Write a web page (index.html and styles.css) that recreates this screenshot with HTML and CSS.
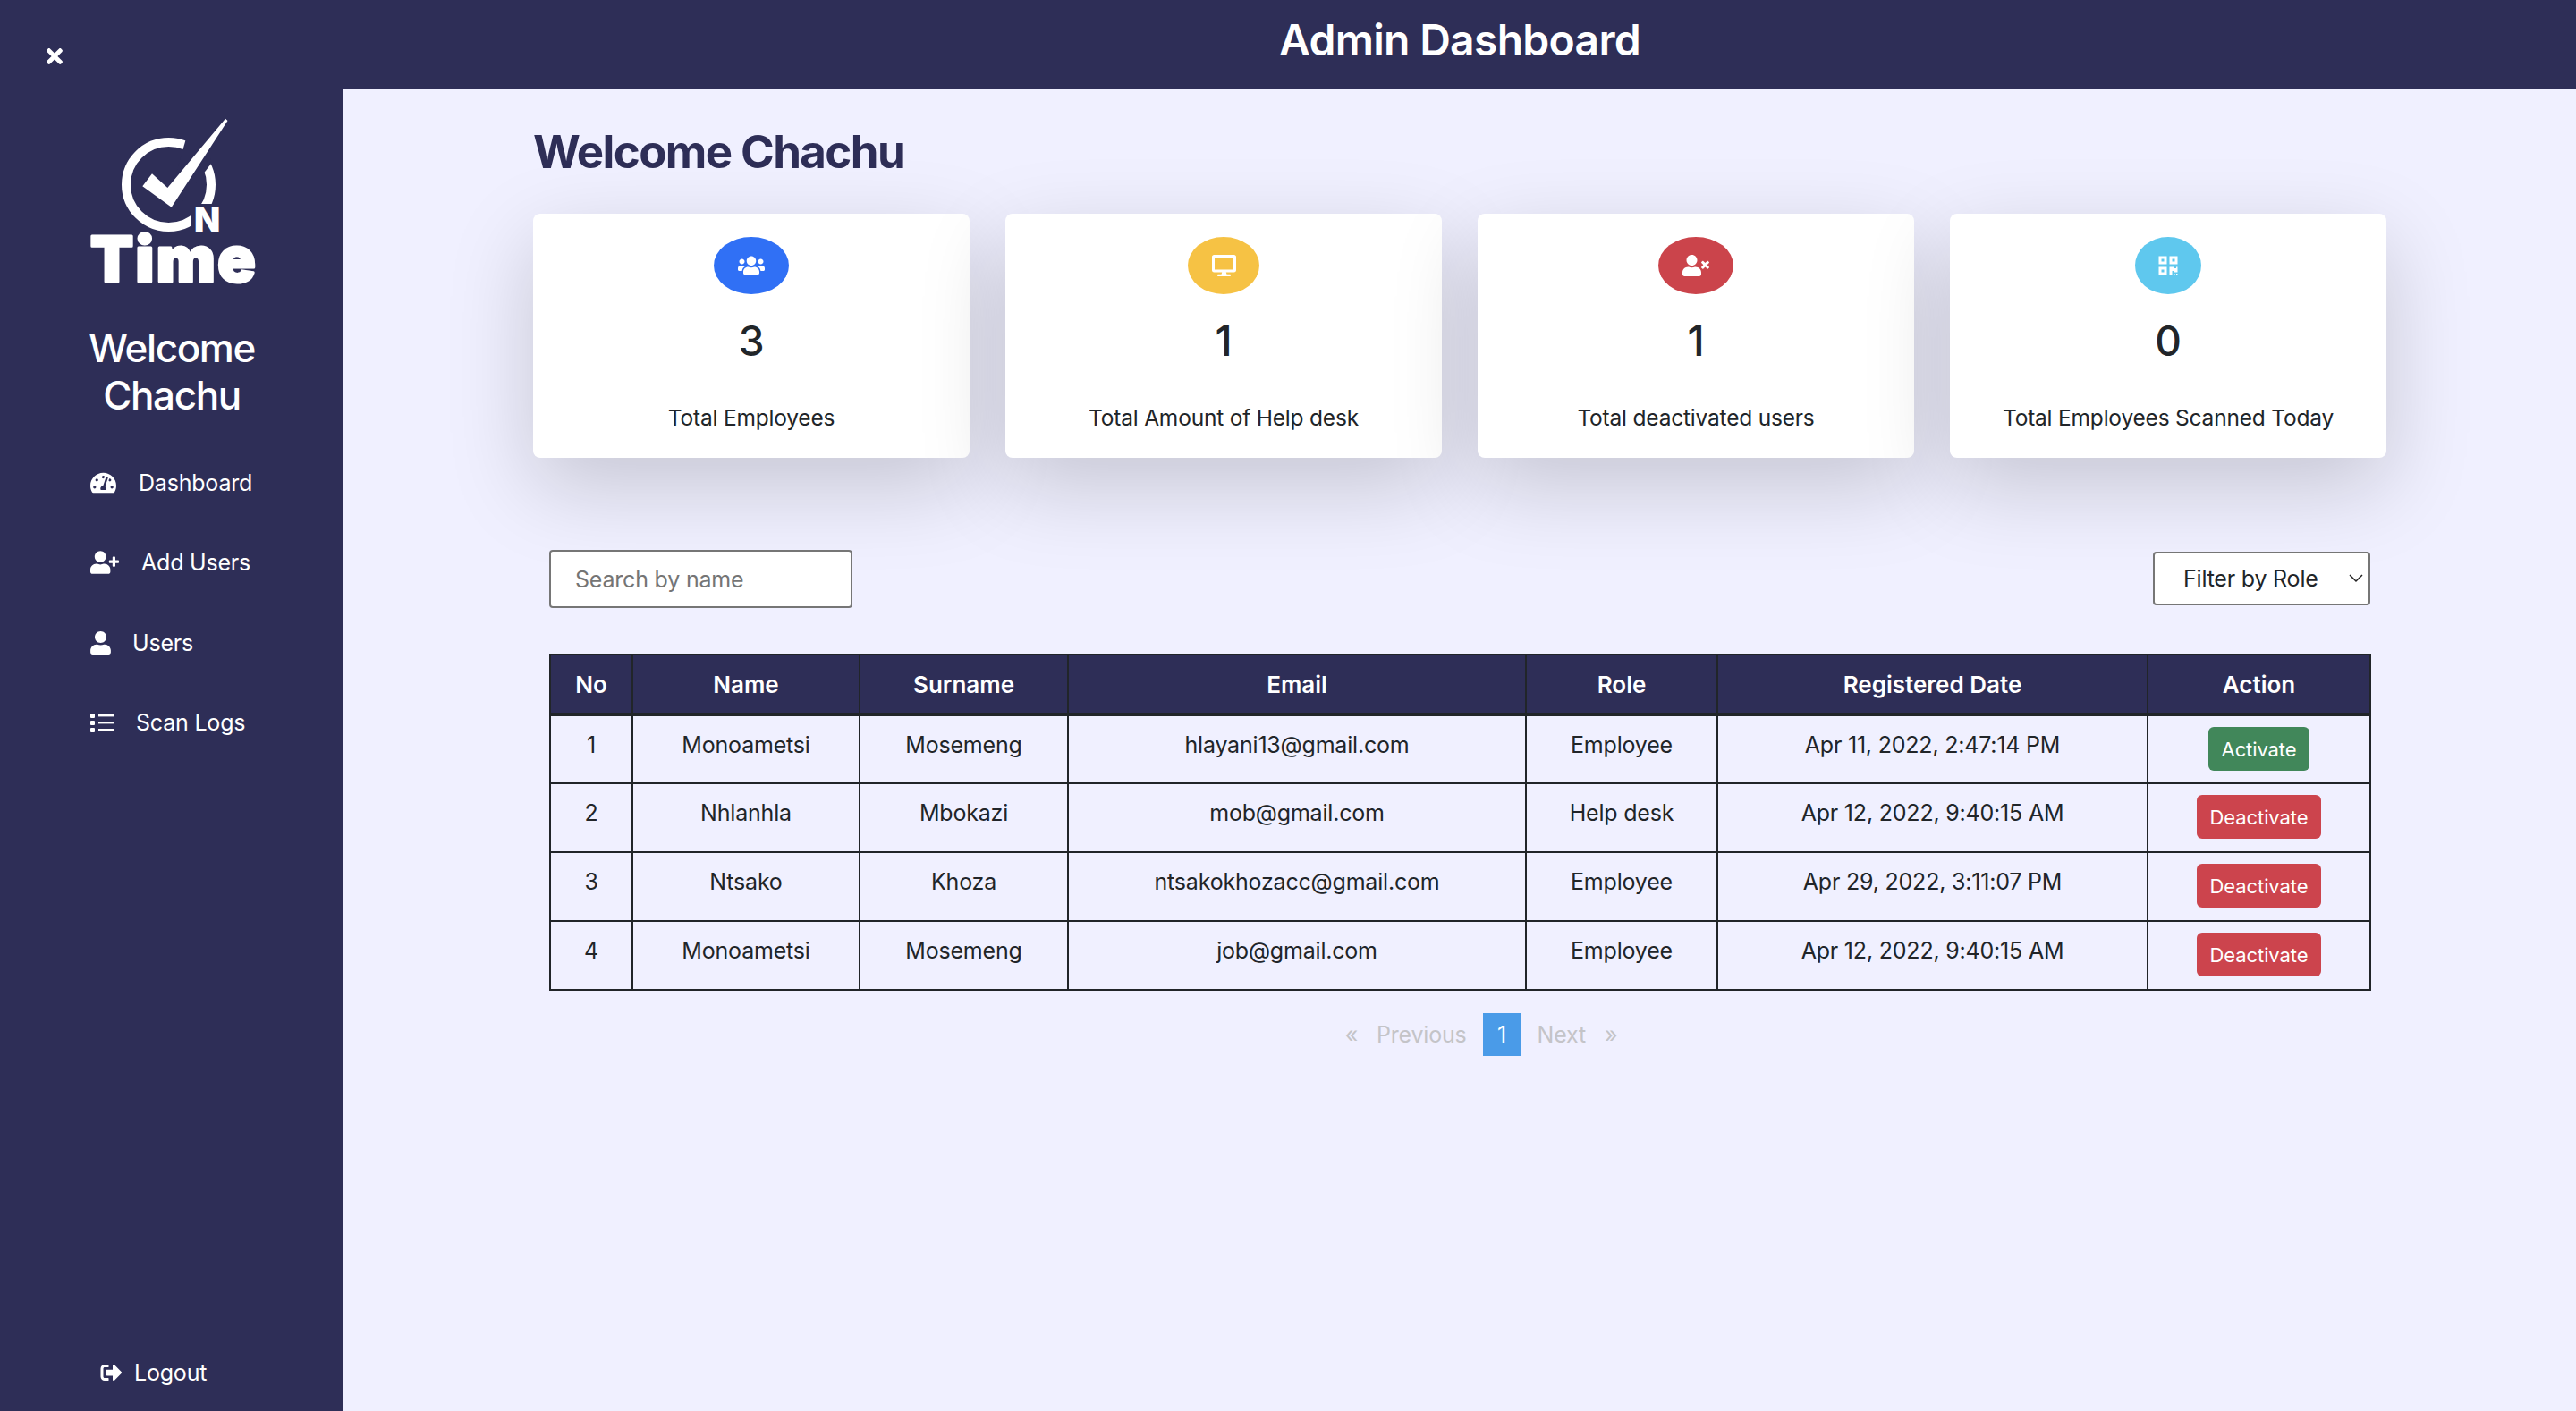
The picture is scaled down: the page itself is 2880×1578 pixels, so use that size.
FILE: index.html
```html
<!DOCTYPE html>
<html lang="en">
<head>
<meta charset="UTF-8">
<title>Admin Dashboard</title>
<link rel="stylesheet" href="styles.css">
</head>
<body>

<aside class="sidebar">
<svg class="close-icon" viewBox="0 0 352 512"><path d="M242.72 256l100.07-100.07c12.28-12.28 12.28-32.19 0-44.48l-22.24-22.24c-12.28-12.28-32.19-12.28-44.48 0L176 189.28 75.93 89.21c-12.28-12.28-32.19-12.28-44.48 0L9.21 111.45c-12.28 12.28-12.28 32.19 0 44.48L109.28 256 9.21 356.07c-12.28 12.28-12.28 32.19 0 44.48l22.24 22.24c12.28 12.28 32.2 12.28 44.48 0L176 322.72l100.07 100.07c12.28 12.28 32.2 12.28 44.48 0l22.24-22.24c12.28-12.28 12.28-32.19 0-44.48L242.72 256z"/></svg>

<svg class="logo" viewBox="0 0 200 210">
<circle cx="96.500" cy="81.500" r="47.500" fill="none" stroke="#fff" stroke-width="10"/>
<path d="M116 30 L140 30 L144 58 L112 100 L96 100 Z" fill="#2e2e57"/>
<path d="M67.300 83.300 L78 69.300 L95.300 85 L160 7.700 L162.500 10 L99.700 106.700 Z" fill="#fff"/>
<rect x="122" y="103" width="34" height="32" fill="#2e2e57"/>
<text class="logo-n" x="125" y="134">N</text>
<text class="logo-time" x="9" y="189.500">Time</text>
</svg>

<h2 class="side-welcome">Welcome<br>Chachu</h2>

<nav class="side-nav">
<a href="#"><svg class="nav-icon gauge" viewBox="0 0 576 512"><path d="M288 32C128.94 32 0 160.94 0 320c0 52.8 14.25 102.26 39.06 144.8 5.61 9.62 16.3 15.2 27.44 15.2h443c11.14 0 21.83-5.58 27.44-15.2C561.75 422.26 576 372.8 576 320c0-159.06-128.94-288-288-288zm0 64c14.71 0 26.58 10.13 30.32 23.65-1.11 2.26-2.64 4.23-3.45 6.67l-9.22 27.67c-5.13 3.49-10.97 6.01-17.64 6.01-17.67 0-32-14.33-32-32S270.33 96 288 96zM96 384c-17.67 0-32-14.33-32-32s14.33-32 32-32 32 14.33 32 32-14.33 32-32 32zm48-160c-17.67 0-32-14.33-32-32s14.33-32 32-32 32 14.33 32 32-14.33 32-32 32zm246.77-72.41l-61.33 184C343.13 347.33 352 364.54 352 384c0 11.72-3.38 22.55-8.88 32H232.88c-5.5-9.45-8.88-20.28-8.88-32 0-33.94 26.5-61.43 59.9-63.59l61.34-184.01c4.17-12.56 17.73-19.45 30.36-15.17 12.57 4.19 19.35 17.79 15.17 30.36zm14.66 57.2l15.52-46.55c3.47-1.29 7.13-2.23 11.05-2.23 17.67 0 32 14.33 32 32s-14.33 32-32 32c-11.38-.01-20.89-6.28-26.57-15.22zM480 384c-17.67 0-32-14.33-32-32s14.33-32 32-32 32 14.33 32 32-14.33 32-32 32z"/></svg>Dashboard</a>
<a href="#"><svg class="nav-icon user-plus" viewBox="0 0 640 512"><path d="M624 208h-64v-64c0-8.800-7.200-16-16-16h-32c-8.800 0-16 7.200-16 16v64h-64c-8.800 0-16 7.200-16 16v32c0 8.800 7.200 16 16 16h64v64c0 8.800 7.200 16 16 16h32c8.800 0 16-7.200 16-16v-64h64c8.800 0 16-7.200 16-16v-32c0-8.800-7.200-16-16-16zm-400 48c70.700 0 128-57.300 128-128S294.700 0 224 0 96 57.300 96 128s57.300 128 128 128zm89.600 32h-16.700c-22.200 10.200-46.900 16-72.900 16s-50.600-5.800-72.900-16h-16.700C60.200 288 0 348.200 0 422.400V464c0 26.500 21.500 48 48 48h352c26.500 0 48-21.500 48-48v-41.600c0-74.200-60.200-134.400-134.400-134.400z"/></svg>Add Users</a>
<a href="#"><svg class="nav-icon user" viewBox="0 0 448 512"><path d="M224 256c70.700 0 128-57.300 128-128S294.700 0 224 0 96 57.300 96 128s57.300 128 128 128zm89.600 32h-16.700c-22.200 10.200-46.900 16-72.900 16s-50.600-5.800-72.900-16h-16.700C60.200 288 0 348.200 0 422.400V464c0 26.500 21.500 48 48 48h352c26.500 0 48-21.500 48-48v-41.600c0-74.200-60.200-134.400-134.400-134.400z"/></svg>Users</a>
<a href="#"><svg class="nav-icon list" viewBox="0 0 27 21"><rect y="0" width="5" height="5" rx="1"/><rect y="8" width="5" height="5" rx="1"/><rect y="16" width="5" height="5" rx="1"/><rect x="9" y="1" width="18" height="2.400"/><rect x="9" y="9" width="18" height="2.400"/><rect x="9" y="17" width="18" height="2.400"/></svg>Scan Logs</a>
</nav>

<a class="logout" href="#"><svg class="logout-icon" viewBox="0 0 512 512"><path d="M497 273L329 441c-15 15-41 4.500-41-17v-96H152c-13.300 0-24-10.700-24-24v-96c0-13.300 10.700-24 24-24h136V88c0-21.400 25.900-32 41-17l168 168c9.300 9.400 9.300 24.600 0 34zM192 436v-40c0-6.600-5.400-12-12-12H96c-17.700 0-32-14.300-32-32V160c0-17.700 14.300-32 32-32h84c6.600 0 12-5.400 12-12V76c0-6.600-5.400-12-12-12H96c-53 0-96 43-96 96v192c0 53 43 96 96 96h84c6.600 0 12-5.400 12-12z"/></svg>Logout</a>
</aside>

<div class="content">
<header class="topbar"><h1>Admin Dashboard</h1></header>

<main class="main">
<h2 class="page-title">Welcome Chachu</h2>

<section class="cards">
<div class="card">
<span class="badge badge-blue"><svg viewBox="0 0 640 512"><path d="M96 224c35.300 0 64-28.700 64-64s-28.700-64-64-64-64 28.700-64 64 28.700 64 64 64zm448 0c35.300 0 64-28.700 64-64s-28.700-64-64-64-64 28.700-64 64 28.700 64 64 64zm32 32h-64c-17.600 0-33.500 7.100-45.100 18.600 40.300 22.100 68.900 62 75.100 109.400h66c17.700 0 32-14.300 32-32v-32c0-35.300-28.700-64-64-64zm-256 0c61.900 0 112-50.100 112-112S381.900 32 320 32 208 82.100 208 144s50.100 112 112 112zm76.800 32h-8.300c-20.800 10-43.900 16-68.500 16s-47.600-6-68.500-16h-8.300C179.600 288 128 339.600 128 403.200V432c0 26.500 21.500 48 48 48h288c26.500 0 48-21.500 48-48v-28.800c0-63.600-51.600-115.200-115.200-115.200zm-223.700-13.400C161.500 263.100 145.600 256 128 256H64c-35.300 0-64 28.700-64 64v32c0 17.700 14.300 32 32 32h65.900c6.300-47.400 34.900-87.300 75.200-109.400z"/></svg></span>
<div class="count">3</div>
<p class="card-label">Total Employees</p>
</div>
<div class="card">
<span class="badge badge-yellow"><svg viewBox="0 0 576 512"><path d="M528 0H48C21.500 0 0 21.500 0 48v320c0 26.500 21.500 48 48 48h192l-16 48h-72c-13.300 0-24 10.700-24 24s10.700 24 24 24h272c13.300 0 24-10.700 24-24s-10.700-24-24-24h-72l-16-48h192c26.500 0 48-21.500 48-48V48c0-26.500-21.500-48-48-48zm-16 352H64V64h448v288z"/></svg></span>
<div class="count">1</div>
<p class="card-label">Total Amount of Help desk</p>
</div>
<div class="card">
<span class="badge badge-red"><svg viewBox="0 0 640 512"><path d="M589.600 240l45.600-45.600c6.300-6.300 6.300-16.500 0-22.800l-22.800-22.800c-6.300-6.300-16.500-6.300-22.800 0L544 194.400l-45.600-45.600c-6.300-6.300-16.500-6.300-22.800 0l-22.800 22.800c-6.300 6.300-6.300 16.500 0 22.800l45.600 45.600-45.600 45.600c-6.300 6.300-6.300 16.500 0 22.800l22.800 22.800c6.300 6.300 16.500 6.300 22.800 0l45.600-45.600 45.600 45.600c6.300 6.300 16.500 6.300 22.800 0l22.800-22.800c6.300-6.300 6.300-16.500 0-22.800L589.600 240zM224 256c70.700 0 128-57.300 128-128S294.700 0 224 0 96 57.300 96 128s57.300 128 128 128zm89.600 32h-16.700c-22.200 10.200-46.900 16-72.900 16s-50.600-5.800-72.900-16h-16.700C60.200 288 0 348.200 0 422.400V464c0 26.500 21.500 48 48 48h352c26.500 0 48-21.500 48-48v-41.600c0-74.200-60.200-134.400-134.400-134.400z"/></svg></span>
<div class="count">1</div>
<p class="card-label">Total deactivated users</p>
</div>
<div class="card">
<span class="badge badge-cyan"><svg viewBox="0 0 448 512"><path d="M0 224h192V32H0v192zM64 96h64v64H64V96zm192-64v192h192V32H256zm128 128h-64V96h64v64zM0 480h192V288H0v192zm64-128h64v64H64v-64zm352-64h32v128h-96v-32h-32v96h-64V288h96v32h64v-32zm0 160h32v32h-32v-32zm-64 0h32v32h-32v-32z"/></svg></span>
<div class="count">0</div>
<p class="card-label">Total Employees Scanned Today</p>
</div>
</section>

<section class="users">
<div class="toolbar">
<input class="search" type="text" placeholder="Search by name">
<button class="role-filter" type="button">Filter by Role<svg viewBox="0 0 16 10"><path d="M1 1l7 7 7-7" fill="none" stroke="#222" stroke-width="1.500"/></svg></button>
</div>

<table class="user-table">
<colgroup>
<col class="c-no"><col class="c-name"><col class="c-surname"><col class="c-email"><col class="c-role"><col class="c-date"><col class="c-action">
</colgroup>
<thead>
<tr><th>No</th><th>Name</th><th>Surname</th><th>Email</th><th>Role</th><th>Registered Date</th><th>Action</th></tr>
</thead>
<tbody>
<tr><td>1</td><td>Monoametsi</td><td>Mosemeng</td><td>hlayani13@gmail.com</td><td>Employee</td><td>Apr 11, 2022, 2:47:14 PM</td><td><button class="btn btn-green" type="button">Activate</button></td></tr>
<tr><td>2</td><td>Nhlanhla</td><td>Mbokazi</td><td>mob@gmail.com</td><td>Help desk</td><td>Apr 12, 2022, 9:40:15 AM</td><td><button class="btn btn-red" type="button">Deactivate</button></td></tr>
<tr><td>3</td><td>Ntsako</td><td>Khoza</td><td>ntsakokhozacc@gmail.com</td><td>Employee</td><td>Apr 29, 2022, 3:11:07 PM</td><td><button class="btn btn-red" type="button">Deactivate</button></td></tr>
<tr><td>4</td><td>Monoametsi</td><td>Mosemeng</td><td>job@gmail.com</td><td>Employee</td><td>Apr 12, 2022, 9:40:15 AM</td><td><button class="btn btn-red" type="button">Deactivate</button></td></tr>
</tbody>
</table>

<div class="pager">
<span class="arrow-prev">«</span>
<span class="pager-prev">Previous</span>
<span class="pager-current">1</span>
<span class="pager-next">Next</span>
<span class="arrow-next">»</span>
</div>
</section>
</main>
</div>

</body>
</html>
```

FILE: styles.css
```css
*{box-sizing:border-box}
html,body{height:100%}
body{margin:0;display:flex;height:1578px;overflow:hidden;font-family:Inter,"Noto Sans",sans-serif;font-size:25px;letter-spacing:-.2px;background:#f0f0ff;color:#212529}

.sidebar{width:384px;flex:none;height:100%;background:#2e2e57;color:#fff;display:flex;flex-direction:column;padding-top:50px}
.close-icon{display:block;width:18px;height:26px;margin-left:52px;fill:#fff}
.logo{display:block;flex:none;width:200px;height:210px;margin:49px 0 0 92px}
.logo-n{font:900 38px Inter,sans-serif;fill:#fff}
.logo-time{font:900 70px Inter,sans-serif;fill:#fff;stroke:#fff;stroke-width:3;stroke-linejoin:round;letter-spacing:2.500px}
.side-welcome{margin:28px 0 0;font-size:44px;line-height:53px;font-weight:500;letter-spacing:-1.400px;text-align:center}

.side-nav{display:flex;flex-direction:column;margin-top:26px;padding-left:101px}
.side-nav a{display:flex;align-items:center;height:89.500px;color:#fff;text-decoration:none}
.nav-icon{fill:#fff;flex:none}
.gauge{width:29px;height:26px;margin-right:25px}
.user-plus{width:32px;height:26px;margin-right:25px}
.user{width:23px;height:26px;margin-right:24px}
.list{width:27px;height:21px;margin-right:24px}

.logout{margin-top:auto;margin-bottom:28px;margin-left:111px;display:flex;align-items:center;color:#fff;text-decoration:none}
.logout-icon{width:27px;height:24px;fill:#fff;margin-right:12px}

.content{flex:1;min-width:0;display:flex;flex-direction:column}
.topbar{height:100px;flex:none;background:#2e2e57;color:#fff;text-align:center}
.topbar h1{margin:0;font-size:48px;font-weight:600;letter-spacing:-.7px;line-height:90px}

.main{padding:0 212px}
.page-title{margin:0;padding-top:40px;height:139px;font-size:51px;line-height:60px;font-weight:700;color:#2e2e57;letter-spacing:-1.600px}

.cards{display:grid;grid-template-columns:repeat(4,488px);gap:40px}
.card{height:273px;background:#fff;border-radius:8px;box-shadow:0 32px 96px rgba(0,0,0,.175);display:flex;flex-direction:column;align-items:center;padding-top:26px}
.badge{display:flex;align-items:center;justify-content:center;height:64px;border-radius:50%}
.badge svg{fill:#fff;height:24px}
.badge-blue{width:84px;background:#3070f5}
.badge-blue svg{width:32px}
.badge-yellow{width:80px;background:#f6c244}
.badge-yellow svg{width:27px}
.badge-red{width:84px;background:#cb444b}
.badge-red svg{width:32px}
.badge-cyan{width:74px;background:#5fc8ee}
.badge-cyan svg{width:22px}
.count{margin-top:24px;font-size:46px;line-height:56px;font-weight:500}
.card-label{margin:38px 0 0;font-size:24.500px;line-height:40px}

.users{padding:0 18px}
.toolbar{display:flex;justify-content:space-between;align-items:center;margin-top:103px;height:65px}
.search{width:339px;height:65px;padding:0 27px;background:#fff;border:2px solid #767676;border-radius:4px;font:25px Inter,sans-serif;letter-spacing:-.2px;color:#212529}
.search::placeholder{color:#757575}
.role-filter{display:flex;align-items:center;width:243px;height:60px;margin-top:-1px;padding:0 6px 0 32px;background:#fff;border:2px solid #767676;border-radius:4px;font:25px Inter,sans-serif;letter-spacing:-.2px;color:#212529}
.role-filter svg{width:16px;height:10px;margin-left:auto}

.user-table{width:2035px;margin-top:51px;table-layout:fixed;border-collapse:collapse;border:2px solid #212529}
.c-no{width:92px}
.c-name{width:254px}
.c-surname{width:233px}
.c-email{width:512px}
.c-role{width:214px}
.c-date{width:481px}
.c-action{width:249px}
th,td{border:2px solid #212529;text-align:center;line-height:39px}
th{height:67px;padding:0 8px;background:#2e2e57;color:#fff;font-size:26px;font-weight:600;letter-spacing:0;border-bottom-width:4px}
td{height:77px;padding:12px 8px 0;line-height:41px;vertical-align:top}
.btn{display:block;margin:0 auto;height:49px;padding:0;border:none;border-radius:6px;color:#fff;font:22px Inter,sans-serif;letter-spacing:-.1px}
.btn-green{width:113px;background:#41875a}
.btn-red{width:139px;background:#cc444d}

.pager{display:flex;align-items:center;justify-content:center;margin-top:25px;padding-left:48px;color:#c4c4c8}
.arrow-prev{margin-right:21px}
.pager-prev{margin-right:18px}
.pager-current{width:43px;height:48px;line-height:48px;text-align:center;background:#4a9be8;color:#fff}
.pager-next{margin-left:18px}
.arrow-next{margin-left:21px}
```
